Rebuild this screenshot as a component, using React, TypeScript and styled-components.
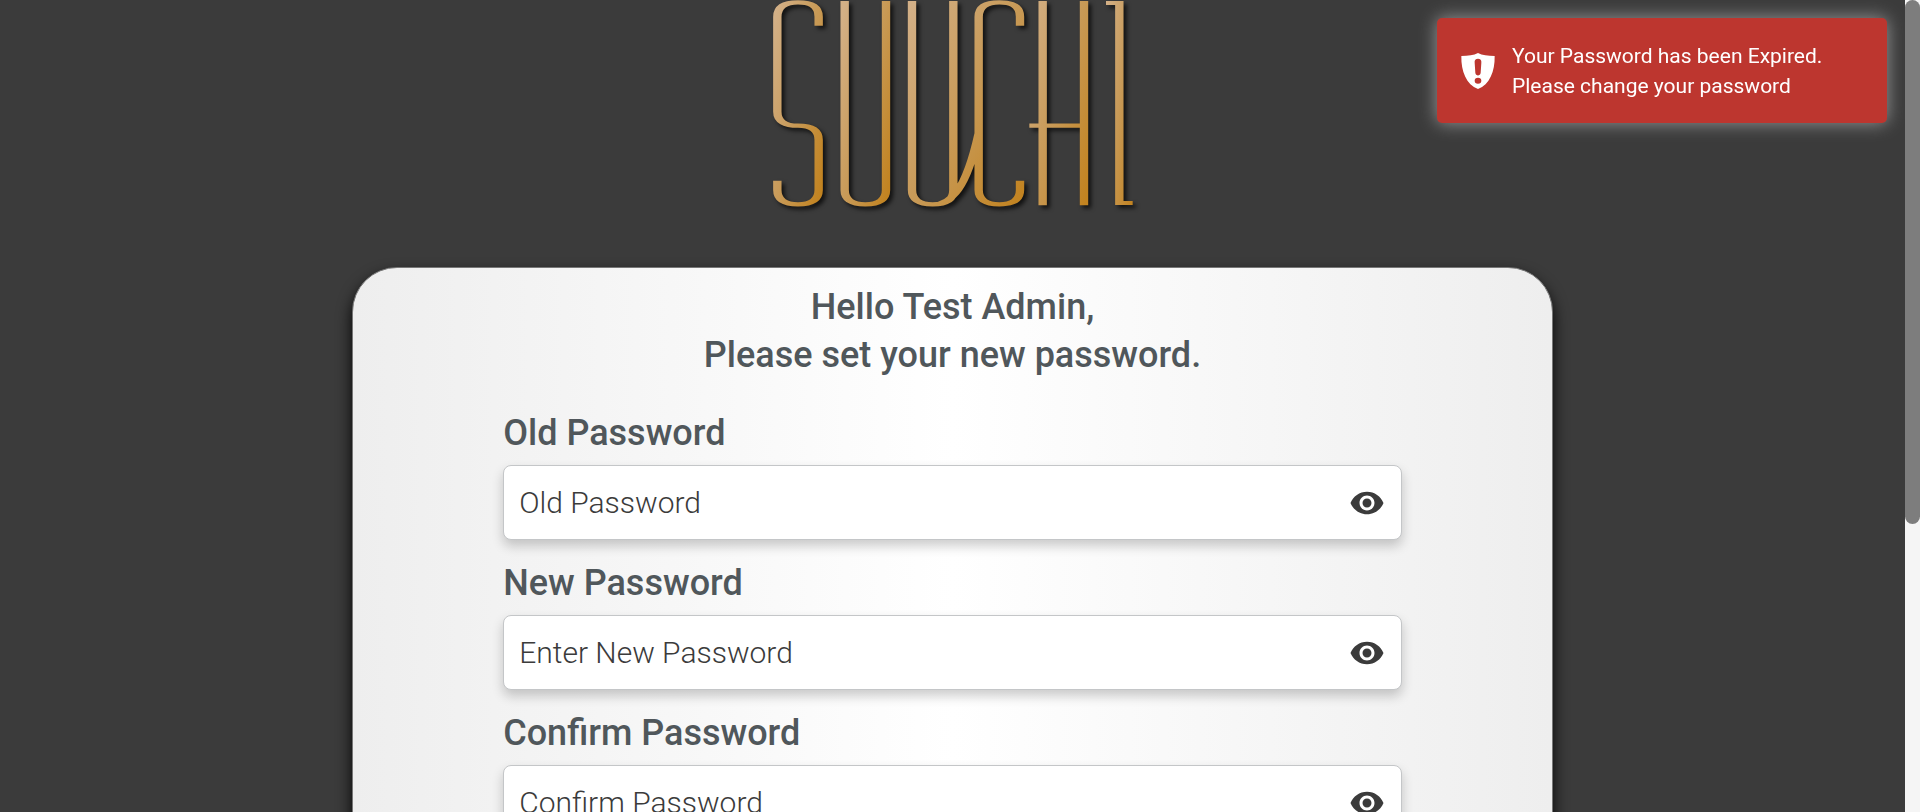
import React, { useEffect, useRef, useState } from "react";
import styled, { createGlobalStyle } from "styled-components";
import { MdVisibility, MdVisibilityOff } from "react-icons/md";

const GlobalStyle = createGlobalStyle`
  *, *::before, *::after { box-sizing: border-box; }
  body {
    margin: 0;
    background: #3b3b3b;
    font-family: Roboto, "Liberation Sans", sans-serif;
  }
`;

const Page = styled.div`
  display: flex;
  height: 100vh;
  background: #3b3b3b;
`;

const Scroller = styled.div`
  flex: 1;
  min-width: 0;
  overflow-y: auto;
  scrollbar-width: none;
`;

const ScrollRail = styled.div`
  flex: none;
  width: 15px;
  background: #f5f5f5;
`;

const ScrollThumb = styled.div`
  border-radius: 8px;
  background: #7d7d7d;
`;

const Content = styled.main`
  display: flex;
  flex-direction: column;
  align-items: center;
  gap: 60px;
  padding-bottom: 60px;
`;

const LogoArt = styled.svg`
  display: block;
  width: 360px;
  height: 207px;
  overflow: visible;
  filter: drop-shadow(3px 3px 2px rgba(0, 0, 0, 0.7));
`;

const Card = styled.form`
  display: flex;
  flex-direction: column;
  align-items: center;
  width: 63%;
  padding: 15px 0 358px;
  border: 1px solid #777;
  border-radius: 45px;
  background: linear-gradient(90deg, #eee, #fff, #eee);
  box-shadow: 0 8px 15px rgba(0, 0, 0, 0.95);
`;

const Heading = styled.h1`
  margin: 0 0 30px;
  color: #50575b;
  font-size: 36px;
  font-weight: 500;
  line-height: 48px;
  text-align: center;
`;

const Fields = styled.div`
  display: flex;
  flex-direction: column;
  gap: 19px;
  width: 75%;
`;

const Field = styled.div`
  display: flex;
  flex-direction: column;
  gap: 8px;
`;

const Label = styled.label`
  color: #50575b;
  font-size: 36px;
  font-weight: 500;
  line-height: 48px;
`;

const InputBox = styled.div`
  display: flex;
  align-items: center;
  height: 75px;
  padding: 0 16px 0 15px;
  border: 1px solid #c4c6c8;
  border-radius: 8px;
  background: #fff;
  box-shadow: 0 6px 12px rgba(0, 0, 0, 0.2);
`;

const Input = styled.input`
  flex: 1;
  min-width: 0;
  height: 100%;
  padding: 0;
  border: 0;
  outline: 0;
  background: transparent;
  color: #3b3b3b;
  font-family: inherit;
  font-size: 30px;
  font-weight: 300;

  &::placeholder {
    color: #3b3b3b;
    opacity: 1;
  }
`;

const EyeButton = styled.button`
  display: flex;
  padding: 0;
  border: 0;
  background: none;
  color: #3b3b3b;
  cursor: pointer;

  svg {
    width: 36px;
    height: 36px;
  }
`;

const Toast = styled.div`
  position: fixed;
  top: 18px;
  right: 33px;
  display: flex;
  align-items: center;
  gap: 17px;
  width: 450px;
  padding: 23px 24px 22px;
  border-radius: 5px;
  background: #bd362f;
  box-shadow: 0 0 18px #999;
  color: #fff;
  font-size: 21px;
  line-height: 30px;

  svg {
    flex: none;
    width: 34px;
    height: 36px;
  }
`;

const ToastText = styled.p`
  margin: 0;
`;

const Logo = () => (
  <LogoArt viewBox="69 0 1080 621" role="img" aria-label="Suuchi">
    <defs>
      <linearGradient id="gold" x1="0" y1="0" x2="1" y2="1">
        <stop offset="0" stopColor="#d3b087" />
        <stop offset="0.5" stopColor="#c89a57" />
        <stop offset="1" stopColor="#c28320" />
      </linearGradient>
    </defs>
    {/* Scaling the pen makes upright strokes twice as heavy as level ones. */}
    <g transform="scale(2 1)" fill="none" stroke="url(#gold)" strokeWidth="12.6">
      <path d="M103 77V50C103 18 90 7 72 7S41 18 41 50V335C41 366 54 377 72 377S103 388 103 420V570C103 602 90 613 72 613S41 602 41 570V542" />
      <path d="M142 3V570C142 602 155 613 173 613S204 602 204 570V3" />
      <path d="M243 3V570C243 602 256 613 274 613S305 602 305 570V3M274 613C302 613 324 570 343 400M405 77V50C405 18 392 7 374 7S343 18 343 50V570C343 602 356 613 374 613S405 602 405 570V542" />
      <path d="M439 3V616M501 3V616M419 377H501" />
      <path d="M534 9H554V609H574" />
    </g>
  </LogoArt>
);

const ShieldIcon = () => (
  <svg viewBox="0 0 102 108" aria-hidden="true">
    <path
      fill="#fff"
      fillRule="evenodd"
      d="M51 0C38 7 22 9 1 9C0 55 16 95 51 108C86 95 102 55 101 9C80 9 64 7 51 0ZM51 17C58 17 62 21 61 29L59 59C58 70 44 70 43 59L41 29C40 21 44 17 51 17ZM51 74A10 9 0 1 1 51 92A10 9 0 1 1 51 74Z"
    />
  </svg>
);

type PasswordFieldProps = { id: string; label: string; placeholder: string };

const PasswordField = ({ id, label, placeholder }: PasswordFieldProps) => {
  const [shown, setShown] = useState(false);
  return (
    <Field>
      <Label htmlFor={id}>{label}</Label>
      <InputBox>
        <Input id={id} type={shown ? "text" : "password"} placeholder={placeholder} />
        <EyeButton
          type="button"
          aria-label={shown ? "Hide password" : "Show password"}
          onClick={() => setShown(!shown)}
        >
          {shown ? <MdVisibilityOff /> : <MdVisibility />}
        </EyeButton>
      </InputBox>
    </Field>
  );
};

export default function App() {
  const scroller = useRef<HTMLDivElement>(null);
  const [thumb, setThumb] = useState({ offset: 0, size: 0 });

  const measure = () => {
    const el = scroller.current;
    if (!el) return;
    const ratio = el.clientHeight / el.scrollHeight;
    setThumb({ offset: el.scrollTop * ratio, size: el.clientHeight * ratio });
  };

  useEffect(() => {
    measure();
    window.addEventListener("resize", measure);
    return () => window.removeEventListener("resize", measure);
  }, []);

  return (
    <>
      <GlobalStyle />
      <Page>
        <Scroller ref={scroller} onScroll={measure}>
          <Content>
            <Logo />
            <Card>
              <Heading>
                Hello Test Admin,
                <br />
                Please set your new password.
              </Heading>
              <Fields>
                <PasswordField id="old" label="Old Password" placeholder="Old Password" />
                <PasswordField id="new" label="New Password" placeholder="Enter New Password" />
                <PasswordField id="confirm" label="Confirm Password" placeholder="Confirm Password" />
              </Fields>
            </Card>
          </Content>
        </Scroller>
        <ScrollRail aria-hidden="true">
          <ScrollThumb
            style={{ height: thumb.size, transform: `translateY(${thumb.offset}px)` }}
          />
        </ScrollRail>
      </Page>
      <Toast role="alert">
        <ShieldIcon />
        <ToastText>
          Your Password has been Expired.
          <br />
          Please change your password
        </ToastText>
      </Toast>
    </>
  );
}
